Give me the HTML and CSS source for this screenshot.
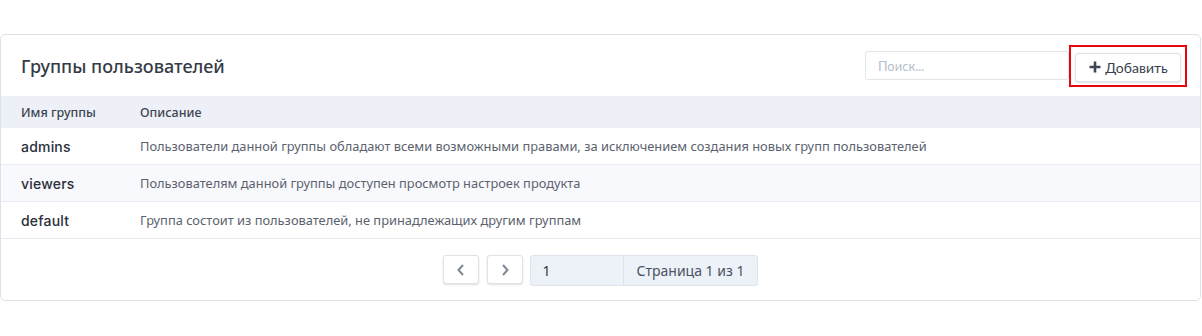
FILE: index.html
```html
<!DOCTYPE html>
<html>
<head>
    <title>Группы пользователей</title>
    <link rel="stylesheet" href="styles.css">
</head>
<body>
    <div class="card">
        <div class="card-header">
            <h2 class="title">Группы пользователей</h2>
            <div class="tools">
                <input class="search" type="text" placeholder="Поиск...">
                <div class="highlight">
                    <button class="btn add">
                        <svg width="12" height="12" viewBox="0 0 12 12"><path d="M6 0.5v11M0.5 6h11" stroke="#3e4653" stroke-width="2.6" fill="none"/></svg>
                        Добавить
                    </button>
                </div>
            </div>
        </div>
        <table class="groups">
            <thead>
                <tr>
                    <th class="col-first">Имя группы</th>
                    <th>Описание</th>
                </tr>
            </thead>
            <tbody>
                <tr>
                    <td class="col-first name">admins</td>
                    <td class="desc">Пользователи данной группы обладают всеми возможными правами, за исключением создания новых групп пользователей</td>
                </tr>
                <tr class="alt">
                    <td class="col-first name">viewers</td>
                    <td class="desc">Пользователям данной группы доступен просмотр настроек продукта</td>
                </tr>
                <tr>
                    <td class="col-first name">default</td>
                    <td class="desc">Группа состоит из пользователей, не принадлежащих другим группам</td>
                </tr>
            </tbody>
        </table>
        <div class="pager">
            <button class="btn page-btn">
                <svg width="10" height="14" viewBox="0 0 10 14"><path d="M7 2L2.5 7 7 12" stroke="#7f8793" stroke-width="2" fill="none"/></svg>
            </button>
            <button class="btn page-btn">
                <svg width="10" height="14" viewBox="0 0 10 14"><path d="M3 2l4.5 5L3 12" stroke="#7f8793" stroke-width="2" fill="none"/></svg>
            </button>
            <div class="page-group">
                <input class="page-input" type="text" value="1">
                <span class="page-label">Страница 1 из 1</span>
            </div>
        </div>
    </div>
</body>
</html>
```

FILE: styles.css
```css
body {
    margin: 0;
    background-color: #fff;
    font-family: "Noto Sans", "Open Sans", sans-serif;
}
.card {
    margin: 34px 1px 0 0;
    border: 1px solid #dde2ea;
    border-radius: 5px;
    background-color: #fff;
}
.card-header {
    display: flex;
    justify-content: space-between;
    align-items: center;
    height: 61px;
    padding: 0 13px 0 20px;
}
.title {
    margin: 0;
    font-size: 18px;
    font-weight: 500;
    color: #343b47;
}
.tools {
    display: flex;
    align-items: center;
}
.search {
    width: 184px;
    height: 27px;
    padding: 0 6px 0 12px;
    border: 1px solid #e1e5ec;
    border-radius: 3px;
    font-family: "Lato", sans-serif;
    font-size: 13px;
    color: #333;
    outline: none;
}
.search::placeholder {
    color: #b7bfcc;
}
.highlight {
    padding: 6px 4px 3px 4px;
    border: 2px solid #e8060c;
}
.btn {
    display: flex;
    align-items: center;
    justify-content: center;
    background-color: #fff;
    border: 1px solid #dde1e8;
    border-radius: 3px;
    box-shadow: 0 1px 2px rgba(0, 0, 0, 0.12);
    cursor: pointer;
}
.add {
    gap: 4px;
    width: 106px;
    height: 29px;
    padding: 0 0 0 1px;
    font-family: "Lato", sans-serif;
    font-size: 14px;
    color: #39414e;
}
.groups {
    width: 100%;
    border-collapse: collapse;
}
.groups th {
    height: 32px;
    padding: 0;
    text-align: left;
    background-color: #edf1f7;
    font-size: 12.5px;
    font-weight: 500;
    color: #3d4451;
}
.groups td {
    height: 36px;
    padding: 0;
    border-bottom: 1px solid #e8ecf2;
}
.groups .col-first {
    width: 119px;
    padding-left: 20px;
}
.groups .name {
    font-family: "Inter", sans-serif;
    font-size: 14px;
    font-weight: 500;
    letter-spacing: 0.2px;
    color: #2a2f39;
}
.groups .desc {
    font-size: 12.85px;
    color: #5b626e;
}
.groups tr.alt td {
    background-color: #f8f9fc;
}
.pager {
    display: flex;
    justify-content: center;
    align-items: flex-start;
    gap: 8px;
    padding: 16px 0 14px 0;
}
.page-btn {
    width: 36px;
    height: 29px;
    padding: 0;
}
.page-group {
    display: flex;
    height: 29px;
    margin-left: -1px;
    border: 1px solid #dfe4ec;
    border-radius: 3px;
    background-color: #edf1f8;
}
.page-input {
    width: 80px;
    padding: 0 0 0 12px;
    border: none;
    border-right: 1px solid #dfe4ec;
    background-color: transparent;
    font-family: "Noto Sans", sans-serif;
    font-size: 14px;
    color: #333a46;
    outline: none;
}
.page-label {
    display: flex;
    align-items: center;
    padding: 0 13px;
    font-size: 14px;
    color: #4b5260;
}
```
